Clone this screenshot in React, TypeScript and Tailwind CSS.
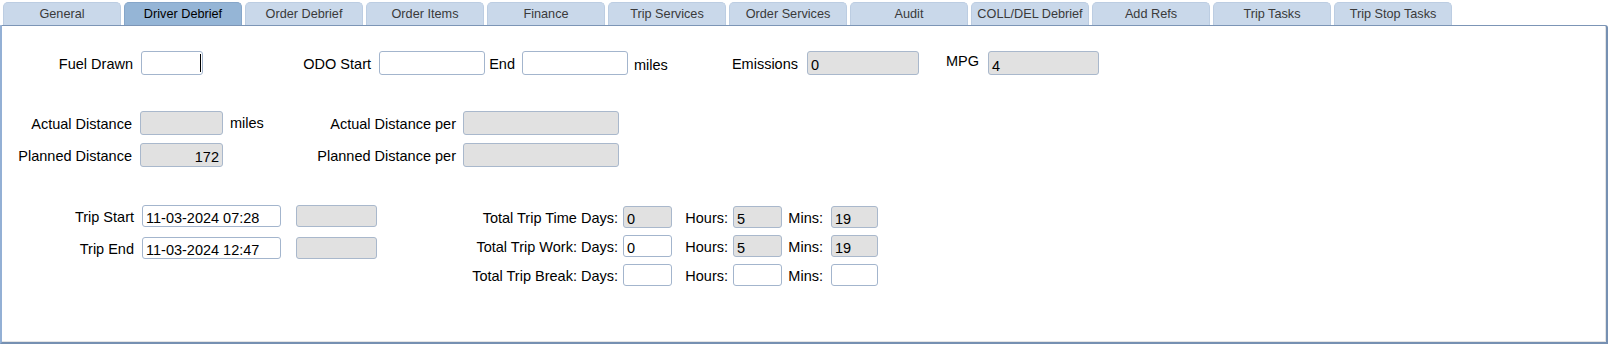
import { FC, ReactNode } from "react";

const tabs = [
  "General",
  "Driver Debrief",
  "Order Debrief",
  "Order Items",
  "Finance",
  "Trip Services",
  "Order Services",
  "Audit",
  "COLL/DEL Debrief",
  "Add Refs",
  "Trip Tasks",
  "Trip Stop Tasks",
];

type BoxProps = {
  w: string;
  value?: string;
  gray?: boolean;
  right?: boolean;
  caret?: boolean;
  className?: string;
};

// plain div "input" so the border/bg render the same every time
const Field: FC<BoxProps> = ({ w, value, gray, right, caret, className = "pt-[4px]" }) => (
  <div
    className={`${w} h-full flex items-center border rounded-[3px] px-[3px] leading-none ${
      gray ? "bg-[#e1e1e1] border-[#a9b8cc]" : "bg-white border-[#a3b5cd]"
    } ${right || caret ? "justify-end" : "justify-start"} ${className}`}
  >
    {value}
    {caret && <span className="w-px h-[18px] bg-black -mr-[2px] -mt-[4px]" />}
  </div>
);

const Label: FC<{ w: string; children: ReactNode; className?: string }> = ({ w, children, className = "mt-[4px]" }) => (
  <span className={`${w} text-right whitespace-nowrap shrink-0 ${className}`}>{children}</span>
);

const TimeRow: FC<{ label: string; days?: string; hours?: string; mins?: string; daysGray?: boolean; hmGray?: boolean }> = ({
  label,
  days,
  hours,
  mins,
  daysGray,
  hmGray,
}) => (
  <div className="flex items-center h-[22px]">
    <Label w="w-[241px]">{label}</Label>
    <Field w="w-[49px]" className="ml-[5px] pt-[4px]" value={days} gray={daysGray} />
    <Label w="w-[56px]">Hours:</Label>
    <Field w="w-[49px]" className="ml-[5px] pt-[4px]" value={hours} gray={hmGray} />
    <Label w="w-[41px]">Mins:</Label>
    <Field w="w-[47px]" className="ml-[8px] pt-[4px]" value={mins} gray={hmGray} />
  </div>
);

export default function App() {
  return (
    <div className="w-[1610px] h-[346px] bg-white text-black text-[14.5px] font-['Liberation_Sans',Arial,sans-serif] overflow-hidden">
      {/* tab strip */}
      <div className="flex gap-[3px] pl-[3px] pt-[2px] h-[25px]">
        {tabs.map((t) => {
          const active = t === "Driver Debrief";
          return (
            <div
              key={t}
              className={`w-[118px] h-[23px] flex items-center justify-center pt-[1px] rounded-t-[5px] border border-b-0 text-[12.7px] ${
                active
                  ? "bg-[#95b5d6] border-[#86a6c9] text-black"
                  : "bg-[#c9d8ea] border-[#bccde2] text-[#3a3a3a]"
              }`}
            >
              {t}
            </div>
          );
        })}
      </div>

      {/* panel */}
      <div className="w-[1608px] h-[319px] border-t border-t-[#7c95b6] border-l-2 border-l-[#93b0d5] border-r-2 border-r-[#7690b2] border-b-2 border-b-[#7690b2] rounded-tr-[3px] shadow-[inset_-1px_-1px_0_#e4e4e4]">
        {/* row 1 */}
        <div className="flex items-center h-[24px] mt-[25px]">
          <Label w="w-[131px]">Fuel Drawn</Label>
          <Field w="w-[62px]" className="ml-[8px] pt-[4px]" caret />
          <Label w="w-[168px]">ODO Start</Label>
          <Field w="w-[106px]" className="ml-[8px] pt-[4px]" />
          <Label w="w-[30px]">End</Label>
          <Field w="w-[106px]" className="ml-[7px] pt-[4px]" />
          <span className="w-[40px] pl-[6px] mt-[6px]">miles</span>
          <Label w="w-[130px]">Emissions</Label>
          <Field w="w-[112px]" className="ml-[9px] pt-[4px]" value="0" gray />
          <Label w="w-[60px]" className="mb-[2px]">MPG</Label>
          <Field w="w-[111px]" className="ml-[9px] pt-[6px]" value="4" gray />
        </div>

        {/* distance rows */}
        <div className="flex items-center h-[24px] mt-[36px]">
          <Label w="w-[130px]">Actual Distance</Label>
          <Field w="w-[83px]" className="ml-[8px]" gray />
          <div className="w-[233px] flex justify-between items-center pl-[7px]">
            <span className="mt-[2px]">miles</span>
            <span className="mt-[4px]">Actual Distance per</span>
          </div>
          <Field w="w-[156px]" className="ml-[7px]" gray />
        </div>
        <div className="flex items-center h-[24px] mt-[8px]">
          <Label w="w-[130px]">Planned Distance</Label>
          <Field w="w-[83px]" className="ml-[8px] pt-[4px]" value="172" right gray />
          <div className="w-[233px] flex justify-end items-center">
            <span className="mt-[4px]">Planned Distance per</span>
          </div>
          <Field w="w-[156px]" className="ml-[7px]" gray />
        </div>

        {/* trip times */}
        <div className="flex items-start mt-[38px]">
          <div className="flex flex-col gap-[10px]">
            <div className="flex items-center h-[22px]">
              <Label w="w-[132px]">Trip Start</Label>
              <Field w="w-[139px]" className="ml-[8px] pt-[4px]" value="11-03-2024 07:28" />
              <Field w="w-[81px]" className="ml-[15px]" gray />
            </div>
            <div className="flex items-center h-[22px]">
              <Label w="w-[132px]">Trip End</Label>
              <Field w="w-[139px]" className="ml-[8px] pt-[4px]" value="11-03-2024 12:47" />
              <Field w="w-[81px]" className="ml-[15px]" gray />
            </div>
          </div>
          <div className="flex flex-col gap-[7px] mt-[1px]">
            <TimeRow label="Total Trip Time Days:" days="0" hours="5" mins="19" daysGray hmGray />
            <TimeRow label="Total Trip Work: Days:" days="0" hours="5" mins="19" hmGray />
            <TimeRow label="Total Trip Break: Days:" />
          </div>
        </div>
      </div>
    </div>
  );
}
